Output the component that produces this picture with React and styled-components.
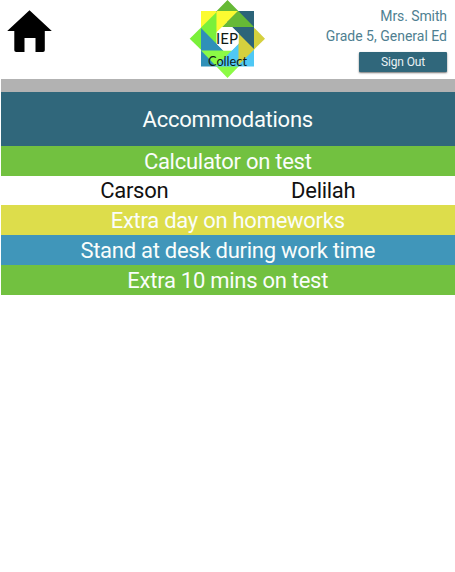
import React from "react";
import styled, { createGlobalStyle } from "styled-components";

const GlobalStyle = createGlobalStyle`
  * { box-sizing: border-box; }
  body { margin: 0; background: #fff; font-family: Roboto, "Liberation Sans", sans-serif; }
`;

const Screen = styled.main`
  width: 455px;
  height: 572px;
  padding: 0 0.5px 0 1px;
  overflow: hidden;
  background: #fff;
`;

const Header = styled.header`
  display: grid;
  grid-template-columns: 188px 76px 1fr;
  height: 79px;
`;

const HomeLink = styled.a`
  padding: 10px 0 0 6px;
  color: #000;
  svg { display: block; }
`;

const Account = styled.div`
  display: flex;
  flex-direction: column;
  align-items: flex-end;
  padding: 7px 7.5px 0 0;
`;

const AccountLine = styled.div`
  color: #4f7f91;
  font-size: 14px;
  line-height: 19.5px;
  letter-spacing: ${(p) => p.$spacing};
  white-space: nowrap;
`;

const SignOut = styled.button`
  width: 88px;
  height: 20.5px;
  margin-top: 5.5px;
  padding: 0;
  border: 0;
  border-radius: 1px;
  background: #30677b;
  box-shadow: 0 1px 2px rgba(0, 0, 0, 0.55);
  color: #e9f1f4;
  font: 12px/20px Roboto, sans-serif;
  letter-spacing: -0.15px;
`;

const Divider = styled.div`
  height: 12.5px;
  background: #b2b2b2;
`;

const Row = styled.div`
  display: flex;
  align-items: center;
  justify-content: center;
  height: ${(p) => p.$height || "30px"};
  padding-top: ${(p) => p.$drop || "2px"};
  background: ${(p) => p.$color};
  color: #fafdfb;
  font-size: 22px;
  line-height: 26px;
  letter-spacing: -0.27px;
  white-space: nowrap;
`;

const Students = styled.div`
  display: grid;
  grid-template-columns: 189px 189px;
  justify-content: center;
  height: 29.5px;
  padding: 2px 0 0 2px;
  color: #111;
  font-size: 22px;
  line-height: 26px;
  letter-spacing: -0.27px;
  text-align: center;
`;

const LogoWord = styled.text`
  fill: #101a14;
  font-family: Lato, sans-serif;
  font-weight: 400;
  font-size: ${(p) => p.$size};
`;

function Logo() {
  return (
    <svg width="76" height="79" viewBox="189 0 76 79" role="img" aria-label="IEP Collect">
      <polygon points="201,11 238,11 201,48" fill="#fbfb31" />
      <polygon points="189.7,38.7 216.7,12 216.7,65" fill="#7af03a" />
      <polygon points="201,28 201,66.5 239,66.5" fill="#2f90b8" />
      <polygon points="201,50.5 254,50.5 227.5,78" fill="#8cfb45" />
      <polygon points="254,28 254,66.5 216,66.5" fill="#4fc8f5" />
      <polygon points="265,38.7 238.5,65 238.5,12" fill="#d5d03e" />
      <polygon points="216,11 254,11 254,49" fill="#2c6479" />
      <polygon points="227.5,0 254,27 222,27 238,11 216.7,11" fill="#66b936" />
      <polygon points="216.7,11 238,11 216.7,32.3" fill="#fbfb31" />
      <polygon points="216.7,32.3 222,27 232,27 238.5,33.5 238.5,43.5 231.7,50.5 223.5,50.5 216.7,43.7" fill="#fff" />
      <LogoWord x="216" y="44" $size="15.5px" textLength="22" lengthAdjust="spacingAndGlyphs">IEP</LogoWord>
      <LogoWord x="208" y="66" $size="13.5px" textLength="39" lengthAdjust="spacingAndGlyphs">Collect</LogoWord>
    </svg>
  );
}

function HomeIcon() {
  return (
    <svg width="46" height="43" viewBox="0 0 46 43">
      <path
        d="M22.5 0.3 L44.8 21 H37.8 V40.3 Q37.8 42 36 42 H28.5 V28 H17.5 V42 H9.2 Q7.3 42 7.3 40.3 V21 H0.2 Z"
        fill="currentColor"
      />
    </svg>
  );
}

export default function App() {
  return (
    <>
      <GlobalStyle />
      <Screen>
        <Header>
          <HomeLink aria-label="Home"><HomeIcon /></HomeLink>
          <Logo />
          <Account>
            <AccountLine $spacing="-0.1px">Mrs. Smith</AccountLine>
            <AccountLine $spacing="0">Grade 5, General Ed</AccountLine>
            <SignOut>Sign Out</SignOut>
          </Account>
        </Header>
        <Divider />
        <Row $color="#30677b" $height="54px" $drop="3px">Accommodations</Row>
        <Row $color="#72c140">Calculator on test</Row>
        <Students>
          <span>Carson</span>
          <span>Delilah</span>
        </Students>
        <Row $color="#dddd4b">Extra day on homeworks</Row>
        <Row $color="#4096ba">Stand at desk during work time</Row>
        <Row $color="#72c140">Extra 10 mins on test</Row>
      </Screen>
    </>
  );
}
